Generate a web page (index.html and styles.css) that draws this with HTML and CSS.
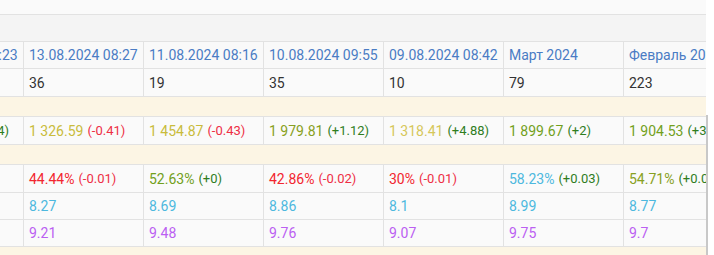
FILE: index.html
```html
<!DOCTYPE html>
<html lang="ru">
<head>
<meta charset="utf-8">
<link rel="stylesheet" href="styles.css">
</head>
<body>
<div class="frame">
  <div class="viewport">
    <div class="topbar"></div>
    <div class="grid">
      <div class="row group"></div>
      <div class="row head">
        <div class="cell">14.08.2024 08:23</div>
        <div class="cell">13.08.2024 08:27</div>
        <div class="cell">11.08.2024 08:16</div>
        <div class="cell">10.08.2024 09:55</div>
        <div class="cell">09.08.2024 08:42</div>
        <div class="cell">Март 2024</div>
        <div class="cell">Февраль 2024</div>
      </div>
      <div class="row tall">
        <div class="cell">12</div>
        <div class="cell">36</div>
        <div class="cell">19</div>
        <div class="cell">35</div>
        <div class="cell">10</div>
        <div class="cell">79</div>
        <div class="cell">223</div>
      </div>
      <div class="row band"></div>
      <div class="row tall">
        <div class="cell"><span class="c-olive">1 327.00</span> <span class="d up">(+0.34)</span></div>
        <div class="cell"><span class="c-yel">1 326.59</span> <span class="d down">(-0.41)</span></div>
        <div class="cell"><span class="c-yel">1 454.87</span> <span class="d down">(-0.43)</span></div>
        <div class="cell"><span class="c-olive">1 979.81</span> <span class="d up">(+1.12)</span></div>
        <div class="cell"><span class="c-yel2">1 318.41</span> <span class="d up">(+4.88)</span></div>
        <div class="cell"><span class="c-green">1 899.67</span> <span class="d up">(+2)</span></div>
        <div class="cell"><span class="c-green">1 904.53</span> <span class="d up">(+3.1)</span></div>
      </div>
      <div class="row band"></div>
      <div class="row tall">
        <div class="cell"><span class="c-red">50%</span></div>
        <div class="cell"><span class="c-red">44.44%</span> <span class="d down">(-0.01)</span></div>
        <div class="cell"><span class="c-green">52.63%</span> <span class="d up">(+0)</span></div>
        <div class="cell"><span class="c-red">42.86%</span> <span class="d down">(-0.02)</span></div>
        <div class="cell"><span class="c-red">30%</span> <span class="d down">(-0.01)</span></div>
        <div class="cell"><span class="c-blue">58.23%</span> <span class="d up">(+0.03)</span></div>
        <div class="cell"><span class="c-olive">54.71%</span> <span class="d up">(+0.01)</span></div>
      </div>
      <div class="row">
        <div class="cell c-blue">8.5</div>
        <div class="cell c-blue">8.27</div>
        <div class="cell c-blue">8.69</div>
        <div class="cell c-blue">8.86</div>
        <div class="cell c-blue">8.1</div>
        <div class="cell c-blue">8.99</div>
        <div class="cell c-blue">8.77</div>
      </div>
      <div class="row">
        <div class="cell c-purple">9.3</div>
        <div class="cell c-purple">9.21</div>
        <div class="cell c-purple">9.48</div>
        <div class="cell c-purple">9.76</div>
        <div class="cell c-purple">9.07</div>
        <div class="cell c-purple">9.75</div>
        <div class="cell c-purple">9.7</div>
      </div>
      <div class="row band"></div>
    </div>
  </div>
  <div class="scrollbar"><div class="thumb"></div></div>
</div>
</body>
</html>
```

FILE: styles.css
```css
html, body {
  margin: 0;
  padding: 0;
  background: #ffffff;
}
body {
  font-family: Roboto, "Noto Sans", "Liberation Sans", sans-serif;
  font-size: 14px;
  color: #333333;
}
.frame {
  display: flex;
  width: 714px;
  height: 255px;
  overflow: hidden;
}
.viewport {
  width: 706px;
  height: 255px;
  overflow: hidden;
  background: #fafafa;
}
.topbar {
  height: 14px;
  background: #fafafa;
  border-bottom: 1px solid #e2e2e2;
}
.grid {
  margin-left: -96px;
}
.row {
  display: flex;
  height: 27px;
  box-sizing: border-box;
  border-bottom: 1px solid #e2e2e2;
  background: #fafafa;
}
.row.tall {
  height: 28px;
}
.row.group {
  height: 27px;
  background: #f4f4f4;
}
.row.head {
  height: 27px;
  background: #f9f9f9;
  color: #4a7cc4;
}
.row.band {
  height: 20px;
  background: #fcf5e4;
}
.cell {
  flex: 0 0 120px;
  box-sizing: border-box;
  border-right: 1px solid #e2e2e2;
  padding-left: 5px;
  display: flex;
  align-items: center;
  white-space: nowrap;
  overflow: hidden;
  gap: 4px;
}
.d {
  font-size: 13px;
}
.up { color: #2f7d1e; }
.down { color: #ee2f45; }
.c-yel { color: #c9bc3c; }
.c-yel2 { color: #d6c75a; }
.c-olive { color: #88a022; }
.c-green { color: #72a01c; }
.c-red { color: #f2262f; }
.c-blue { color: #4db8de; }
.c-purple { color: #bb5ff2; }
.scrollbar {
  width: 8px;
  height: 255px;
  background: #ffffff;
}
.thumb {
  width: 2px;
  margin-top: 115px;
  height: 140px;
  background: #c8c8c8;
}
```
